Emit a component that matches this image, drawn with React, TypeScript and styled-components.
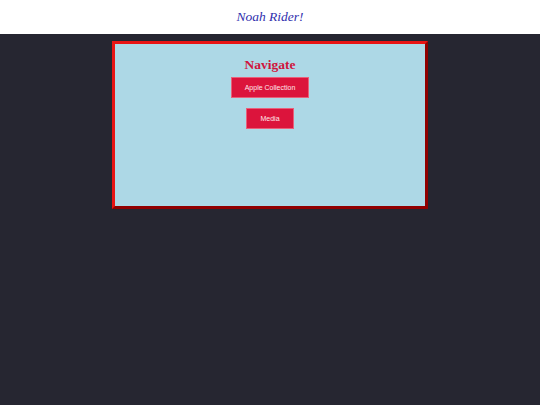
import React from "react";
import styled, { createGlobalStyle } from "styled-components";

const Global = createGlobalStyle`
  html, body { margin: 0; padding: 0; }
  body { background: #262631; min-height: 405px; }
`;

const Header = styled.header`
  height: 34px;
  background: #ffffff;
  display: flex;
  align-items: center;
  justify-content: center;
`;

const Title = styled.h1`
  margin: 0;
  font-family: "Liberation Serif", "DejaVu Serif", serif;
  font-style: italic;
  font-weight: normal;
  font-size: 13.5px;
  color: #2f2fae;
`;

const Main = styled.main`
  display: flex;
  justify-content: center;
  padding-top: 7px;
`;

const Panel = styled.section`
  width: 310px;
  height: 162px;
  background: #add8e6;
  border: 3px solid;
  border-color: #e81414 #900000 #900000 #e81414;
  display: flex;
  flex-direction: column;
  align-items: center;
`;

const Heading = styled.h2`
  margin: 12px 0 4px;
  font-family: "Liberation Serif", "Times New Roman", serif;
  font-weight: bold;
  font-size: 13.5px;
  line-height: 17px;
  color: #d0143c;
`;

const NavList = styled.nav`
  display: flex;
  flex-direction: column;
  align-items: center;
  gap: 10px;
`;

const NavButton = styled.button`
  height: 21px;
  padding: 0 13px;
  background: #dc143c;
  border: 1px solid #e8607a;
  color: #ffe6ea;
  font-family: "Liberation Sans", Arial, sans-serif;
  font-size: 7px;
  cursor: pointer;
`;

export default function App() {
  return (
    <>
      <Global />
      <Header>
        <Title>Noah Rider!</Title>
      </Header>
      <Main>
        <Panel>
          <Heading>Navigate</Heading>
          <NavList>
            <NavButton>Apple Collection</NavButton>
            <NavButton>Media</NavButton>
          </NavList>
        </Panel>
      </Main>
    </>
  );
}
